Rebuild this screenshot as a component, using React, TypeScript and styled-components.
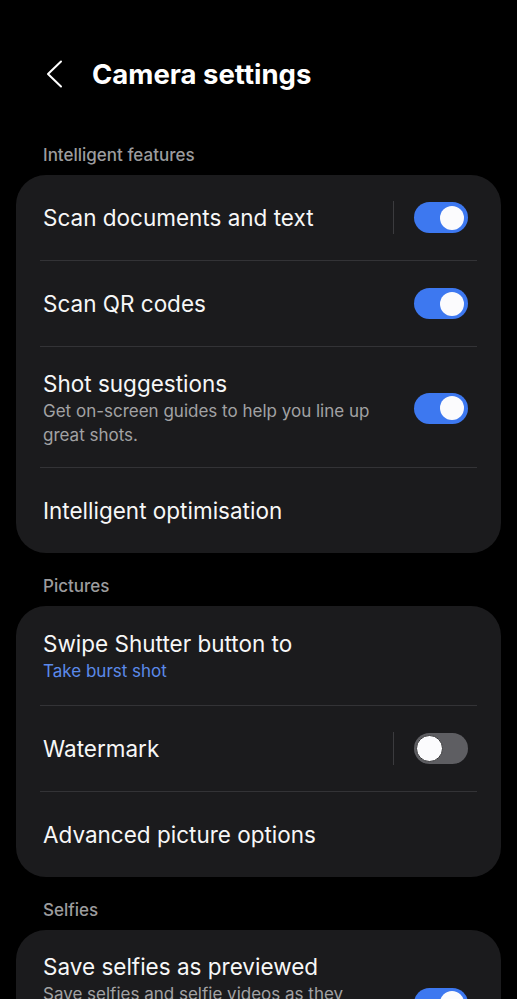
import React from 'react';
import styled, { createGlobalStyle } from 'styled-components';

const GlobalStyle = createGlobalStyle`
  html, body {
    margin: 0;
    padding: 0;
    background: #000;
  }
  body {
    font-family: Inter, Roboto, "Noto Sans", sans-serif;
    color: #fafafa;
    -webkit-font-smoothing: antialiased;
  }
`;

const Screen = styled.div`
  width: 517px;
  height: 999px;
  overflow: hidden;
  background: #000;
`;

const Header = styled.header`
  display: flex;
  align-items: center;
  height: 48px;
  margin-top: 50px;
  padding-left: 44px;
`;

const BackButton = styled.button`
  display: flex;
  align-items: center;
  justify-content: center;
  width: 20px;
  height: 30px;
  padding: 0;
  border: none;
  background: none;
  cursor: pointer;
`;

const Title = styled.h1`
  margin: 0 0 0 28px;
  font-size: 27.5px;
  font-weight: 700;
  color: #fff;
`;

const SectionLabel = styled.div<{ $first?: boolean }>`
  margin: ${p => (p.$first ? '47px' : '23px')} 0 10px;
  padding-left: 43px;
  font-size: 17px;
  line-height: 20px;
  font-weight: 500;
  color: #9c9c9e;
`;

const Card = styled.section`
  margin: 0 16px;
  background: #1b1b1d;
  border-radius: 30px;
  overflow: hidden;
`;

const Row = styled.div<{ $pad?: string }>`
  display: flex;
  align-items: center;
  min-height: 85px;
  box-sizing: border-box;
  padding: ${p => p.$pad || '0 33px 0 27px'};
`;

const Divider = styled.div`
  height: 1px;
  margin: 0 24px;
  background: #333336;
`;

const TextBlock = styled.div`
  flex: 1;
  min-width: 0;
  padding-right: 30px;
`;

const RowTitle = styled.div`
  font-size: 22.5px;
  line-height: 30px;
  color: #f7f7f7;
`;

const RowSub = styled.div<{ $accent?: boolean }>`
  font-size: 17px;
  line-height: 24px;
  color: ${p => (p.$accent ? '#5b8aea' : '#a2a2a4')};
`;

const Separator = styled.div`
  width: 1.5px;
  height: 33px;
  margin-right: 20px;
  background: #3b3b3e;
`;

const Track = styled.div<{ $on: boolean }>`
  position: relative;
  flex: none;
  width: 54px;
  height: 31px;
  border-radius: 16px;
  background: ${p => (p.$on ? '#3d78f0' : '#5e5e62')};
`;

const Knob = styled.div<{ $on: boolean }>`
  position: absolute;
  top: ${p => (p.$on ? '3.5px' : '2px')};
  left: ${p => (p.$on ? '26px' : '2px')};
  width: ${p => (p.$on ? '24px' : '27px')};
  height: ${p => (p.$on ? '24px' : '27px')};
  box-sizing: border-box;
  border-radius: 50%;
  background: #fbfbfd;
  border: ${p => (p.$on ? 'none' : '1.5px solid #3a3a3c')};
`;

const Toggle = ({ on }: { on: boolean }) => (
  <Track $on={on}>
    <Knob $on={on} />
  </Track>
);

type Item = {
  title: string;
  sub?: string;
  accent?: boolean;
  toggle?: boolean;
  split?: boolean;
  pad?: string;
};

const sections: { label: string; items: Item[] }[] = [
  {
    label: 'Intelligent features',
    items: [
      { title: 'Scan documents and text', toggle: true, split: true },
      { title: 'Scan QR codes', toggle: true },
      {
        title: 'Shot suggestions',
        sub: 'Get on-screen guides to help you line up great shots.',
        toggle: true,
        pad: '22px 33px 20px 27px',
      },
      { title: 'Intelligent optimisation' },
    ],
  },
  {
    label: 'Pictures',
    items: [
      {
        title: 'Swipe Shutter button to',
        sub: 'Take burst shot',
        accent: true,
        pad: '23px 33px 22px 27px',
      },
      { title: 'Watermark', toggle: false, split: true },
      { title: 'Advanced picture options' },
    ],
  },
  {
    label: 'Selfies',
    items: [
      {
        title: 'Save selfies as previewed',
        sub: 'Save selfies and selfie videos as they appear in the preview without flipping them.',
        toggle: true,
        pad: '22px 33px 20px 27px',
      },
    ],
  },
];

const App: React.FC = () => {
  return (
    <Screen>
      <GlobalStyle />
      <Header>
        <BackButton aria-label="Back">
          <svg width="18" height="28" viewBox="0 0 18 28" fill="none">
            <path d="M16 1.5 L3 14 L16 26.5" stroke="#fff" strokeWidth="2" strokeLinecap="round" strokeLinejoin="round" />
          </svg>
        </BackButton>
        <Title>Camera settings</Title>
      </Header>
      {sections.map((section, si) => (
        <React.Fragment key={section.label}>
          <SectionLabel $first={si === 0}>{section.label}</SectionLabel>
          <Card>
            {section.items.map((item, i) => (
              <React.Fragment key={item.title}>
                {i > 0 && <Divider />}
                <Row $pad={item.pad}>
                  <TextBlock>
                    <RowTitle>{item.title}</RowTitle>
                    {item.sub && <RowSub $accent={item.accent}>{item.sub}</RowSub>}
                  </TextBlock>
                  {item.split && <Separator />}
                  {item.toggle !== undefined && <Toggle on={item.toggle} />}
                </Row>
              </React.Fragment>
            ))}
          </Card>
        </React.Fragment>
      ))}
    </Screen>
  );
};

export default App;
